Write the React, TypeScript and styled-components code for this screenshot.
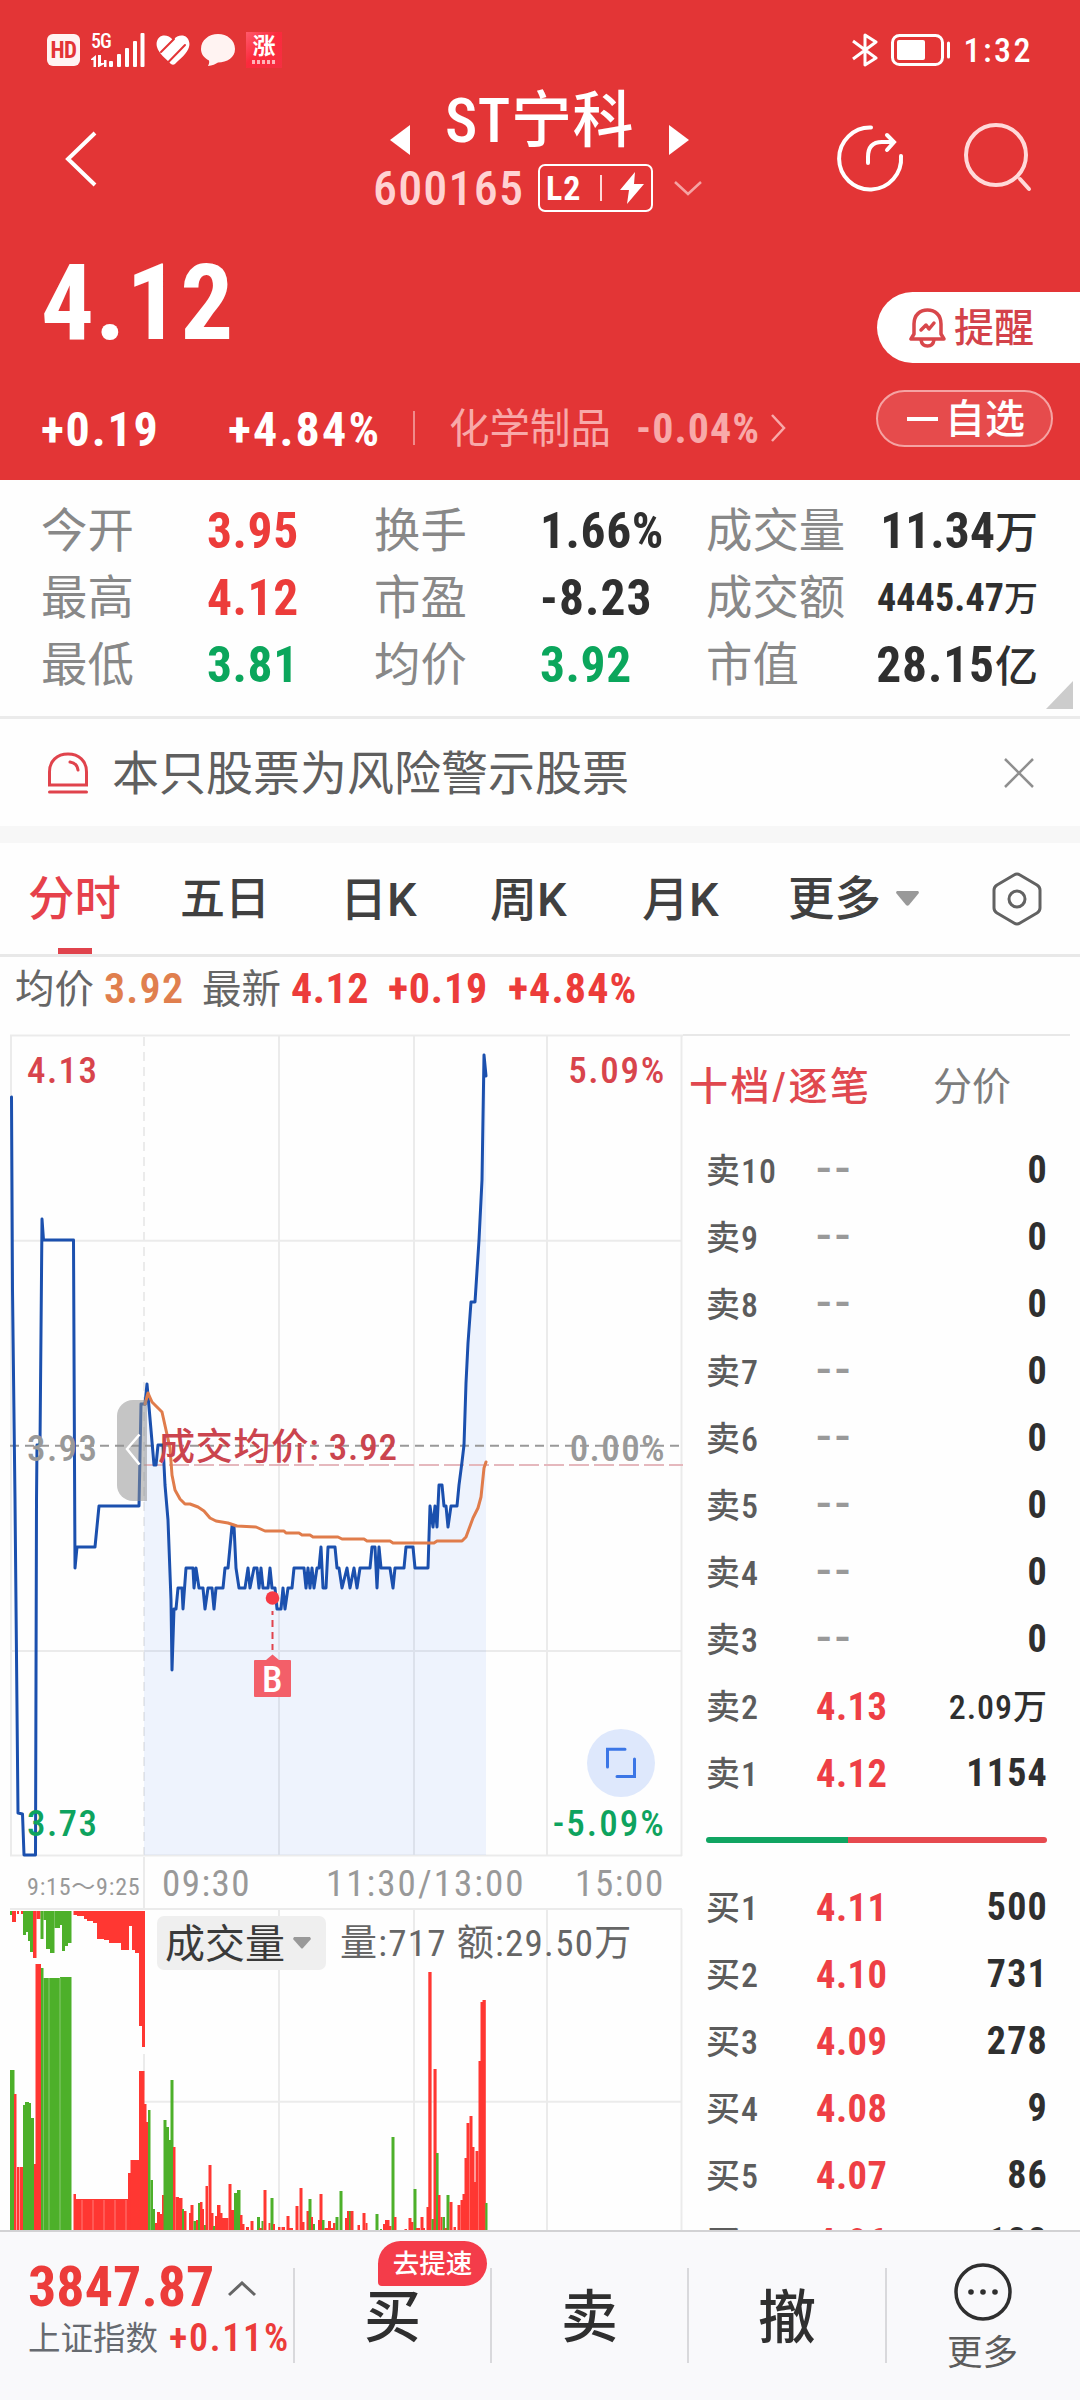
import React from "react";
import styled, { createGlobalStyle } from "styled-components";

const RED = "#e33536";
const UP = "#ec3c3a";
const DOWN = "#0ba65c";
const INK = "#2f2f2f";
const GRID = "#ebebeb";
const BAR_RED = "#ff3732";
const BAR_GREEN = "#4db02a";

const Global = createGlobalStyle`
  * { box-sizing: border-box; }
  body { margin: 0; background: #fff; }
  svg { display: block; flex: none; }
`;

const Screen = styled.div`
  width: 1080px;
  height: 2400px;
  display: flex;
  flex-direction: column;
  overflow: hidden;
  background: #fefefe;
  font-family: Roboto, "Noto Sans CJK SC", sans-serif;
  font-stretch: 85%;
  line-height: 1;
`;

const Txt = styled.span<{ $s: number; $c?: string; $w?: number; $ls?: number; $dy?: number }>`
  display: block;
  flex: none;
  white-space: pre;
  padding-top: 3px;
  font-size: ${(p) => p.$s}px;
  line-height: 1.2;
  color: ${(p) => p.$c ?? "inherit"};
  font-weight: ${(p) => p.$w ?? 400};
  letter-spacing: ${(p) => p.$ls ?? 0}px;
  margin-top: ${(p) => p.$dy ?? 0}px;
`;

/* figures: narrow digits set with open spacing */
const Num = styled(Txt)`
  letter-spacing: calc(${(p) => p.$ls ?? 0}px + 0.058em);
`;

/* ---------- header ---------- */

const Header = styled.header`
  height: 480px;
  flex: none;
  background: ${RED};
  color: #fff;
`;

const StatusBar = styled.div`
  height: 80px;
  padding: 20px 47px 0 47px;
  display: flex;
  align-items: center;
  justify-content: space-between;
`;

const StatusGroup = styled.div<{ $gap: number }>`
  display: flex;
  align-items: center;
  gap: ${(p) => p.$gap}px;
`;

const HdBadge = styled.div`
  width: 33px;
  height: 32px;
  border-radius: 6px;
  background: #fff3f2;
  color: ${RED};
  display: flex;
  align-items: center;
  justify-content: center;
  font-size: 23px;
  font-weight: 700;
  letter-spacing: -0.5px;
`;

const Signal = styled.div`
  width: 54px;
  height: 34px;
  display: grid;
  grid-template-columns: 18px 36px;
  font-size: 20px;
  line-height: 16px;
  font-weight: 500;
  font-stretch: 75%;
  letter-spacing: -1px;
`;

const AppTile = styled.div`
  width: 36px;
  height: 36px;
  background: linear-gradient(135deg, #ff5a6c, #fb2a3c 45%, #f52f42);
  display: flex;
  flex-direction: column;
  align-items: center;
  gap: 2px;
  padding-top: 4px;
  font-size: 23px;
  line-height: 22px;
  font-weight: 700;
`;

const TileRule = styled.div`
  width: 24px;
  height: 4px;
  background: repeating-linear-gradient(90deg, #ffb3b8 0 3px, transparent 3px 5px);
`;

const Nav = styled.div`
  height: 140px;
  display: grid;
  grid-template-columns: 360px 360px 360px;
`;

const NavLeft = styled.div`
  padding: 50px 0 0 64px;
`;

const NavCenter = styled.div`
  display: flex;
  flex-direction: column;
`;

const TitleRow = styled.div`
  height: 78px;
  display: flex;
  align-items: center;
  justify-content: space-between;
  padding: 0 31px 0 30px;
`;

const TitleArrow = styled.svg`
  margin-top: 41px;
`;

const CodeRow = styled.div`
  height: 60px;
  display: flex;
  align-items: center;
  padding-left: 13px;
`;

const CodeCell = styled.div`
  width: 165px;
`;

const LevelBox = styled.div`
  width: 115px;
  height: 48px;
  margin-right: 21px;
  border: 2px solid #fff;
  border-radius: 7px;
  display: flex;
  align-items: center;
  padding-left: 6px;
`;

const LevelRule = styled.div`
  width: 2px;
  height: 26px;
  margin-right: 18px;
  background: #ffd9d9;
`;

const NavRight = styled.div`
  display: flex;
  align-items: flex-start;
  gap: 57px;
  padding: 43px 0 0 115px;
`;

const Quote = styled.div`
  height: 260px;
  display: grid;
  grid-template-columns: 860px 220px;
`;

const PriceLine = styled.div`
  height: 160px;
  display: flex;
  align-items: center;
  padding-left: 41px;
`;

const ChangeLine = styled.div`
  height: 96px;
  display: flex;
  align-items: center;
  padding-left: 41px;
`;

const Cell = styled.div<{ $w: number }>`
  width: ${(p) => p.$w}px;
  flex: none;
  display: flex;
  align-items: center;
`;

const ThinRule = styled.div`
  width: 2px;
  height: 34px;
  background: #f08b8b;
`;

const QuoteActions = styled.div`
  display: flex;
  flex-direction: column;
  align-items: flex-end;
  padding-top: 72px;
  gap: 27px;
`;

const AlertPill = styled.div`
  width: 203px;
  height: 71px;
  border-radius: 36px 0 0 36px;
  background: #fff;
  display: flex;
  align-items: center;
  gap: 8px;
  padding-left: 32px;
`;

const WatchPill = styled.div`
  width: 177px;
  height: 57px;
  margin-right: 27px;
  border-radius: 29px;
  border: 2px solid #f5a3a3;
  background: #e64b4c;
  display: flex;
  align-items: center;
  gap: 7px;
  padding-left: 29px;
`;

const Dash = styled.div`
  width: 31px;
  height: 4px;
  background: #fff;
`;

/* ---------- statistics ---------- */

const Stats = styled.section`
  position: relative;
  height: 239px;
  flex: none;
  padding: 17px 42px 0 41px;
  border-bottom: 3px solid ${GRID};
  display: grid;
  grid-template-columns: 166px 167px 166px 166px 1fr;
  grid-template-rows: repeat(3, 67px);
  align-items: center;
`;

const StatValue = styled.div<{ $c: string }>`
  display: flex;
  align-items: baseline;
  color: ${(p) => p.$c};
`;

const LastPair = styled.div`
  display: flex;
  align-items: center;
  justify-content: space-between;
`;

const Corner = styled.svg`
  position: absolute;
  right: 7px;
  bottom: 7px;
`;

/* ---------- notice ---------- */

const Notice = styled.section`
  height: 107px;
  flex: none;
  display: flex;
  align-items: center;
  padding: 0 46px 0 47px;
`;

const NoticeText = styled.div`
  flex: 1;
  padding-left: 23px;
`;

const Band = styled.div`
  height: 17px;
  flex: none;
  background: #f7f7f7;
`;

/* ---------- tabs ---------- */

const Tabs = styled.nav`
  height: 114px;
  flex: none;
  display: flex;
  border-bottom: 3px solid #e8e8e8;
`;

const Tab = styled.div<{ $pad: number; $w: number; $on?: boolean }>`
  width: ${(p) => p.$w}px;
  padding-left: ${(p) => p.$pad}px;
  height: 111px;
  display: flex;
  align-items: center;
  gap: 15px;
  color: ${(p) => (p.$on ? "#e6414b" : "#404040")};
  background: ${(p) =>
    p.$on ? "linear-gradient(#e0434c, #e0434c) 58px 105px / 34px 6px no-repeat" : "none"};
`;

const TabText = styled(Txt)`
  font-stretch: 100%;
`;

const Info = styled.div`
  height: 77px;
  flex: none;
  padding: 0 0 15px 15px;
  display: flex;
  align-items: center;
`;

/* ---------- main area ---------- */

const Main = styled.main`
  height: 1196px;
  flex: none;
  display: flex;
  overflow: hidden;
`;

const ChartColumn = styled.div`
  width: 683px;
  flex: none;
`;

const PricePane = styled.div`
  position: relative;
  height: 823px;
`;

const ChartLabel = styled.div<{ $top: number; $left?: number; $right?: number; $c: string; $ls?: number }>`
  position: absolute;
  top: ${(p) => p.$top}px;
  ${(p) => (p.$left !== undefined ? `left: ${p.$left}px;` : `right: ${p.$right}px;`)}
  color: ${(p) => p.$c};
  font-size: 37px;
  line-height: 44px;
  font-weight: 500;
  letter-spacing: ${(p) => p.$ls ?? 1.4}px;
  white-space: pre;
`;

const Axis = styled.div`
  height: 51px;
  display: flex;
  align-items: center;
  color: #999;
  padding-left: 27px;
`;

const AxisCell = styled.div<{ $w: number; $pad?: number; $line?: boolean }>`
  width: ${(p) => p.$w}px;
  height: 51px;
  flex: none;
  display: flex;
  align-items: center;
  padding-left: ${(p) => p.$pad ?? 0}px;
  border-right: ${(p) => (p.$line ? `2px solid ${GRID}` : "none")};
`;

const VolumePane = styled.div`
  position: relative;
  height: 322px;
`;

const VolumeHead = styled.div`
  position: absolute;
  left: 157px;
  top: 8px;
  display: flex;
  align-items: center;
  gap: 14px;
`;

const VolumeSelect = styled.div`
  width: 169px;
  height: 54px;
  border-radius: 7px;
  background: #efefef;
  display: flex;
  align-items: center;
  gap: 8px;
  padding-left: 8px;
`;

/* ---------- order book ---------- */

const Book = styled.aside`
  flex: 1;
  display: flex;
  flex-direction: column;
`;

const BookTabs = styled.div`
  height: 102px;
  flex: none;
  margin-right: 10px;
  border-top: 2px solid #e8e8e8;
  display: flex;
  align-items: center;
  padding-left: 6px;
`;

const BookRow = styled.div`
  height: 67px;
  flex: none;
  display: grid;
  grid-template-columns: 110px 110px 1fr;
  align-items: center;
  padding: 0 32px 0 23px;
`;

const RightCell = styled.div`
  display: flex;
  justify-content: flex-end;
  align-items: baseline;
`;

const NoPrice = styled(Txt)`
  font-stretch: 100%;
`;

const Ratio = styled.div`
  height: 6px;
  flex: none;
  margin: 31px 33px 30px 23px;
  border-radius: 3px;
  background: linear-gradient(90deg, #10a562 0 142px, #e64a4f 142px);
`;

/* ---------- bottom bar ---------- */

const Bottom = styled.footer`
  height: 170px;
  flex: none;
  border-top: 2px solid #d2d2d4;
  background: #f9f9fb;
  display: flex;
  align-items: flex-start;
  padding-top: 36px;
`;

const IndexBox = styled.div`
  width: 293px;
  padding-left: 28px;
`;

const IndexLine = styled.div<{ $h: number }>`
  height: ${(p) => p.$h}px;
  display: flex;
  align-items: center;
`;

const Action = styled.div<{ $w: number }>`
  position: relative;
  width: ${(p) => p.$w}px;
  height: 95px;
  border-left: 2px solid #d9d9dc;
  display: flex;
  align-items: center;
  justify-content: center;
`;

const MoreAction = styled(Action)`
  flex-direction: column;
  padding-top: 6px;
`;

const SpeedBadge = styled.div`
  position: absolute;
  left: 83px;
  top: -27px;
  width: 109px;
  height: 45px;
  border-radius: 23px 23px 23px 4px;
  background: #f43c4a;
  color: #fff;
  display: flex;
  align-items: center;
  justify-content: center;
`;

/* ---------- data ---------- */

type Stat = [string, string, string, string, string, string, string, string, string, boolean];

const stats: Stat[] = [
  ["今开", "3.95", UP, "换手", "1.66%", INK, "成交量", "11.34", "万", false],
  ["最高", "4.12", UP, "市盈", "-8.23", INK, "成交额", "4445.47", "万", true],
  ["最低", "3.81", DOWN, "均价", "3.92", DOWN, "市值", "28.15", "亿", false],
];

const sells: [string, string, string][] = [
  ["10", "--", "0"], ["9", "--", "0"], ["8", "--", "0"], ["7", "--", "0"], ["6", "--", "0"],
  ["5", "--", "0"], ["4", "--", "0"], ["3", "--", "0"], ["2", "4.13", "2.09万"], ["1", "4.12", "1154"],
];

const buys: [string, string, string][] = [
  ["1", "4.11", "500"], ["2", "4.10", "731"], ["3", "4.09", "278"],
  ["4", "4.08", "9"], ["5", "4.07", "86"], ["6", "4.06", "188"],
];

const preLine =
  "11.5,1097 12.5,1290 15,1500 18,1813 22.5,1814 24,1855 35.5,1855 36.5,1500 37,1445 40,1445 42,1219 43.5,1240 73.5,1240 75,1568 77,1547 95,1547 99,1506 139,1506 141,1404 145,1404";

const dayLine =
  "145,1404 147,1384 151,1430 154,1465 156,1465 158,1445 163,1445 165,1485 168,1520 171,1600 172,1670 174,1609 176,1609 178,1588 182,1588 183,1609 186,1568 193,1568 194,1588 196,1568 199,1588 203,1588 205,1609 208,1588 212,1588 214,1609 216,1588 223,1588 225,1568 228,1568 232,1526 234,1526 236,1568 239,1588 245,1588 248,1568 250,1588 254,1568 257,1568 259,1588 261,1568 263,1588 268,1588 270,1568 272,1588 275,1588 277,1609 281,1609 283,1588 285,1609 288,1588 292,1588 294,1568 304,1568 306,1588 308,1568 310,1588 312,1568 314,1588 317,1568 319,1568 321,1547 323,1588 326,1588 328,1547 335,1547 337,1568 339,1568 342,1588 347,1568 350,1588 354,1568 357,1588 360,1568 370,1568 372,1547 375,1547 377,1588 379,1547 381,1568 390,1568 393,1588 395,1568 404,1568 406,1547 413,1547 415,1568 428,1568 430,1506 433,1527 435,1506 437,1527 439,1485 442,1485 444,1506 446,1506 448,1527 451,1506 457,1506 459,1485 462,1462 464,1445 466,1383 468,1343 471,1302 475,1302 479,1240 482,1180 484,1055 486,1076";

const avgLine =
  "145,1404 148,1393 152,1402 158,1408 162,1412 166,1430 170,1448 172,1475 175,1490 180,1499 185,1504 190,1504 198,1507 204,1511 210,1518 216,1521 228,1523 237,1526 256,1527 265,1531 284,1531 286,1533 299,1533 302,1535 310,1535 313,1537 338,1537 342,1539 364,1539 367,1541 390,1541 393,1543 434,1543 437,1541 462,1541 466,1537 473,1518 478,1508 481,1497 484,1468 486,1462";

type Bar = [number, number, number, 0 | 1];

/* x start, x end, lower edge, 1 = up / 0 = down */
const hanging: Bar[] = [
  [10, 12, 1915, 0], [12, 16, 1922, 1], [17, 19, 1914, 1], [21, 23, 1914, 1], [23, 26, 1935, 0],
  [26, 28, 1932, 0], [28, 30, 1941, 0], [30, 33, 1952, 0], [33, 36.5, 1958, 1], [36.5, 40.5, 1919, 1],
  [40.5, 43.5, 1939, 0], [43.5, 46, 1920, 0], [46, 50, 1949, 0], [50, 54.5, 1953, 0], [54.5, 60, 1928, 0],
  [60, 62, 1925, 0], [62, 65, 1951, 0], [65, 68, 1946, 0], [68, 71.5, 1943, 0], [73.5, 77, 1915, 1],
  [77, 84, 1916, 1], [84, 87, 1919, 1], [87, 93, 1921, 1], [93, 97, 1923, 1], [97, 104, 1939, 1],
  [104, 109, 1940, 1], [109, 121, 1943, 1], [121, 129, 1950, 1], [129, 132, 1926, 1],
  [132, 135, 1950, 1], [135, 139, 1953, 1], [139, 142, 2026, 1], [142, 145, 2047, 1],
];

const rising: Bar[] = [
  [10, 14.5, 2070, 0], [14, 16.5, 2094, 1], [17, 19.5, 2167, 1], [20, 23, 2167, 1], [23, 25, 2105, 0], [25, 29, 2102, 0],
  [29, 31, 2103, 0], [31, 34, 2118, 0], [34, 36, 2164, 1], [35.5, 41, 1964, 1], [41, 43.5, 1968, 0],
  [43.5, 60, 1978, 0], [60, 71.5, 1977, 0], [73.5, 76, 2194, 1], [76, 128, 2199, 1], [128, 131, 2173, 1],
  [130.5, 139.5, 2160, 1], [139, 144.5, 2071, 1], [144, 146.5, 2104, 1], [146, 148, 2122, 1],
  [148, 150.5, 2110, 0], [150.5, 153, 2180, 0], [153, 155, 2209, 0], [155, 157, 2223, 1],
  [157, 160, 2212, 1], [160, 162, 2214, 1], [162, 164, 2195, 1], [163.5, 166.5, 2120, 0],
  [166, 169, 2127, 0], [169, 171, 2140, 0], [170.5, 173.5, 2080, 0], [173, 175.5, 2147, 1],
  [175.5, 179, 2197, 1], [179, 182.5, 2198, 1], [182, 184, 2209, 0], [184, 186.5, 2211, 1],
  [189, 191, 2213, 1], [190.5, 193.5, 2205, 1], [193.5, 196, 2221, 0], [196, 198, 2220, 1],
  [198, 200, 2203, 0], [200, 202.5, 2202, 1], [202, 204, 2209, 1], [204, 206, 2225, 0],
  [205.5, 208, 2186, 1], [208.5, 211.5, 2165, 1], [211, 213.5, 2213, 1], [213, 215, 2226, 0],
  [215, 217.5, 2216, 1], [217, 220.5, 2205, 1], [220, 222.5, 2213, 1], [222, 228.5, 2218, 1],
  [228.5, 231.5, 2184, 1], [231, 234, 2210, 1], [234, 237, 2193, 0], [237, 240.5, 2190, 0],
  [240, 242.5, 2215, 1], [242, 244.5, 2224, 1], [246, 249, 2227, 1], [250.5, 253.5, 2221, 1],
  [257, 260, 2217, 0], [259, 262, 2228, 1], [261.5, 263.5, 2221, 0], [263.5, 266.5, 2190, 1],
  [268.5, 270.5, 2223, 1], [270.5, 273.5, 2198, 0], [273, 275, 2224, 1], [278, 280.5, 2227, 1],
  [281.5, 285, 2227, 1], [286.5, 289.5, 2216, 1], [289, 293, 2228, 1], [295.5, 298.5, 2206, 1],
  [299.5, 302.5, 2188, 1], [302, 304.5, 2222, 1], [306.5, 309, 2211, 1], [308.5, 311.5, 2199, 0],
  [311, 313, 2217, 1], [313, 315, 2224, 0], [318, 320, 2220, 1], [319.5, 322.5, 2194, 1],
  [322, 324.5, 2220, 0], [324.5, 328, 2228, 1], [328, 331, 2221, 1], [331, 333.5, 2228, 1],
  [333, 335.5, 2223, 1], [335.5, 338.5, 2217, 0], [339.5, 342.5, 2191, 0], [345, 347.5, 2218, 1],
  [347, 353.5, 2211, 1], [349, 350.5, 2211, 0], [357.5, 360, 2225, 1], [362.5, 365.5, 2213, 1], [365.5, 367.5, 2223, 1],
  [375.5, 378.5, 2214, 0], [380, 382, 2229, 0], [383, 385.5, 2224, 1], [385, 389.5, 2220, 1],
  [389, 391.5, 2226, 1], [391.5, 394.5, 2137, 0], [394, 396.5, 2217, 1], [404.5, 407, 2229, 1],
  [408.5, 411.5, 2218, 1], [411, 413.5, 2222, 1], [413.5, 416.5, 2189, 0], [416, 420, 2228, 1],
  [420.5, 423.5, 2217, 1], [423, 425, 2228, 1], [426.5, 429, 2207, 1], [428.3, 431.6, 1972, 1],
  [431.5, 434, 2219, 0], [433.5, 436.6, 2069, 1], [436, 438.6, 2153, 0], [438, 440.5, 2195, 1],
  [440.5, 442.5, 2217, 1], [442.5, 445, 2217, 0], [444.5, 447, 2228, 1], [446.5, 449.5, 2195, 0],
  [449.5, 452.5, 2202, 1], [453.5, 456, 2227, 1], [457.5, 460.5, 2205, 1], [460.5, 463, 2200, 1],
  [462.5, 465, 2194, 1], [464.5, 467.5, 2158, 1], [466.5, 469.5, 2123, 1], [469.5, 472.5, 2116, 1],
  [472, 474.5, 2147, 1], [474, 476, 2182, 1], [475.5, 478.5, 2151, 1], [478.5, 481, 2061, 1],
  [480.5, 483.5, 2002, 1], [482.5, 485.8, 2000, 1], [485.3, 487.5, 2203, 0],
];

const seams = [49, 60, 82, 93, 104, 115, 126];

/* ---------- charts ---------- */

function PriceSvg() {
  return (
    <svg width="683" height="823" viewBox="0 1034 683 823" fill="none">
      <g stroke={GRID} strokeWidth="2">
        <path d="M10 1035.5H683M11 1035V1856M279 1035V1856M414 1035V1856M547 1035V1856M681.5 1035V1856M10 1240.7H682M10 1651H682" />
        <path d="M10 1855.5H682" />
        <path d="M144 1037V1856" strokeDasharray="9 6" />
      </g>
      <polygon points={`${dayLine} 486,1855 144,1855 144,1404`} fill="#1e64f0" fillOpacity="0.07" />
      <path d="M10 1445.7H680" stroke="#999" strokeWidth="2" strokeDasharray="9 6" />
      <path d="M144 1465H683" stroke="#e5b8bd" strokeWidth="2" strokeDasharray="20 5" />
      <g stroke="#1b50ae" strokeWidth="3" strokeLinejoin="round" strokeLinecap="round">
        <polyline points={preLine} />
        <polyline points={dayLine} />
      </g>
      <polyline points={avgLine} stroke="#e07c4b" strokeWidth="3" strokeLinejoin="round" strokeLinecap="round" />
      <path d="M147 1400H133a16 16 0 0 0-16 16V1485a16 16 0 0 0 16 16H147Z" fill="#8f8f8f" fillOpacity="0.52" />
      <path d="M139.500 1434.500L127 1449L139.500 1464.500" stroke="#fff" strokeWidth="2.500" />
      <path d="M272.500 1611V1650" stroke="#e0434c" strokeWidth="2" strokeDasharray="7 5" strokeDashoffset="3" />
      <circle cx="272.500" cy="1598" r="6.800" fill="#f63a45" />
      <path d="M266 1660L272.500 1654.500L279 1660H290a1 1 0 0 1 1 1V1696a1 1 0 0 1-1 1H255a1 1 0 0 1-1-1V1661a1 1 0 0 1 1-1Z" fill="#f35f69" />
      <circle cx="621" cy="1763" r="34" fill="#dee8fc" />
      <path d="M607.500 1767V1749.300H625M634.500 1759V1776.500H617" stroke="#3b76e6" strokeWidth="3" strokeLinecap="round" />
    </svg>
  );
}

function VolumeSvg() {
  return (
    <svg width="683" height="322" viewBox="0 1908 683 322" fill="none">
      <path
        d="M10 1909H682M144 2101.700H682M279 1909V2230M414 1909V2230M547 1909V2230M681.500 1909V2230M144 2054V2090"
        stroke={GRID}
        strokeWidth="2"
      />
      {hanging.map(([a, b, y, up], i) => (
        <rect key={i} x={a} y={1911} width={b - a} height={y - 1911} fill={up ? BAR_RED : BAR_GREEN} />
      ))}
      {rising.map(([a, b, y, up], i) => (
        <rect key={i} x={a} y={y} width={b - a} height={2230 - y} fill={up ? BAR_RED : BAR_GREEN} />
      ))}
      {seams.map((x) => (
        <path key={x} d={`M${x} ${x < 73 ? 1978 : 2200}V2230`} stroke="#fff" strokeOpacity="0.35" />
      ))}
    </svg>
  );
}

export default function App() {
  return (
    <Screen>
      <Global />
      <Header>
        <StatusBar>
          <StatusGroup $gap={11}>
            <HdBadge>HD</HdBadge>
            <Signal>
              <span>5G</span>
              <svg width="54" height="34" viewBox="0 0 54 34" style={{ marginLeft: -18 }} fill="#fff">
                <path d="M0 26L5 22V34H2.500V27H0ZM7 22H10V30H15L8 34H7ZM13 27H15.500V34H13Z" />
                <rect x="18" y="28" width="4" height="6" rx="1" />
                <rect x="26" y="21" width="4" height="13" rx="1" />
                <rect x="34" y="15" width="4" height="19" rx="1" />
                <rect x="42" y="8" width="4" height="26" rx="1" />
                <rect x="49.500" y="0" width="4" height="34" rx="1" />
              </svg>
            </Signal>
            <svg width="34" height="30" viewBox="0 0 34 30">
              <path d="M17 5C20 1 24 0 27 .5C32 1.500 34.500 7 33 12C31.500 18 24 24 19 29Q17 30.500 15 29C10 24 2.500 18 1 12C-.5 7 2 1.500 7 .5C10 0 14 1 17 5Z" fill="#fff" />
              <path d="M5 17L18 4M11.500 28L29 10" stroke={RED} strokeWidth="2" strokeLinecap="round" />
            </svg>
            <svg width="34" height="32" viewBox="0 0 34 32" fill="#fff3f2">
              <path d="M17 0C26 0 34 6 34 15S26 28 17 28.500C15 30 11 31.500 7 32C8 30 8.500 28.500 8 26.500C3 24 0 20 0 15C0 6 8 0 17 0Z" />
            </svg>
            <AppTile>
              涨
              <TileRule />
            </AppTile>
          </StatusGroup>
          <StatusGroup $gap={12}>
            <svg width="28" height="34" viewBox="0 0 28 34" fill="none" stroke="#fff" strokeWidth="3" strokeLinejoin="round">
              <path d="M2 8L25 25L14 32V2L25 9L2 26" />
            </svg>
            <svg width="60" height="32" viewBox="0 0 60 32" fill="none">
              <rect x="1.500" y="1.500" width="50" height="29" rx="7" stroke="#fff" strokeWidth="3" />
              <rect x="6" y="6" width="28" height="20" rx="2" fill="#fff" />
              <path d="M57.500 9V23" stroke="#fff" strokeWidth="3" strokeLinecap="round" />
            </svg>
            <Num $s={34} $w={500} $ls={0.5} $dy={-3}>1:32</Num>
          </StatusGroup>
        </StatusBar>
        <Nav>
          <NavLeft>
            <svg width="34" height="58" viewBox="0 0 34 58" fill="none" stroke="#fff" strokeWidth="4">
              <path d="M31 3L4 29L31 55" />
            </svg>
          </NavLeft>
          <NavCenter>
            <TitleRow>
              <TitleArrow width="20" height="30" viewBox="0 0 20 30" fill="#fff"><path d="M20 0V30L0 15Z" /></TitleArrow>
              <Txt $s={61} $w={500} $ls={0.6} $dy={3}>ST宁科</Txt>
              <TitleArrow width="20" height="30" viewBox="0 0 20 30" fill="#fff"><path d="M0 0V30L20 15Z" /></TitleArrow>
            </TitleRow>
            <CodeRow>
              <CodeCell><Num $s={48} $w={500} $c="#ffd2d2" $ls={-1.6} $dy={-2}>600165</Num></CodeCell>
              <LevelBox>
                <Cell $w={54}><Num $s={34} $w={700} $ls={-1} $dy={-3}>L2</Num></Cell>
                <LevelRule />
                <svg width="24" height="32" viewBox="0 0 24 32" fill="#fff"><path d="M15 0L0 18H9L7 32L24 12H14Z" /></svg>
              </LevelBox>
              <svg width="28" height="16" viewBox="0 0 28 16" fill="none" stroke="#f5a3a3" strokeWidth="2.500"><path d="M1 2L14 14L27 2" /></svg>
            </CodeRow>
          </NavCenter>
          <NavRight>
            <svg width="70" height="70" viewBox="0 0 70 70" fill="none" stroke="#fff" strokeWidth="4" strokeLinecap="round">
              <path d="M36 4.500A31 31 0 1 0 66 33" />
              <path d="M33 40V34Q33 19 47 19H58M52 12L59 19L52 27" />
            </svg>
            <svg width="72" height="72" viewBox="0 0 72 72" fill="none" stroke="#ffd9d9" strokeWidth="4" strokeLinecap="round">
              <circle cx="34" cy="32" r="30" />
              <path d="M58 56L67 66" />
            </svg>
          </NavRight>
        </Nav>
        <Quote>
          <div>
            <PriceLine><Num $s={105} $w={700} $ls={-5.2} $dy={4}>4.12</Num></PriceLine>
            <ChangeLine>
              <Cell $w={187}><Num $s={48} $w={700} $ls={-1}>+0.19</Num></Cell>
              <Cell $w={185}><Num $s={48} $w={700} $ls={-0.6}>+4.84%</Num></Cell>
              <Cell $w={36}><ThinRule /></Cell>
              <Cell $w={187}><Txt $s={40.5} $c="#f8a9a9">化学制品</Txt></Cell>
              <Cell $w={134}><Num $s={42} $w={700} $c="#f8a9a9" $ls={-1.4}>-0.04%</Num></Cell>
              <svg width="16" height="28" viewBox="0 0 16 28" fill="none" stroke="#f8a9a9" strokeWidth="2.500"><path d="M2 1L14 14L2 27" /></svg>
            </ChangeLine>
          </div>
          <QuoteActions>
            <AlertPill>
              <svg width="37" height="40" viewBox="0 0 37 40" fill="none" stroke="#d8474b" strokeWidth="3.500" strokeLinejoin="round" strokeLinecap="round">
                <path d="M2 31H35L32 26V16C32 7 26 2 18.500 2S5 7 5 16V26ZM12 32Q13 38 18.500 38T25 32" />
                <path d="M12 22L17 17L20 21L25 15" />
              </svg>
              <Txt $s={40} $w={500} $c="#d3424a">提醒</Txt>
            </AlertPill>
            <WatchPill>
              <Dash />
              <Txt $s={40} $w={500}>自选</Txt>
            </WatchPill>
          </QuoteActions>
        </Quote>
      </Header>

      <Stats>
        {stats.map(([l1, v1, c1, l2, v2, c2, l3, v3, unit, small]) => (
          <React.Fragment key={l1}>
            <Txt $s={46.4} $c="#888">{l1}</Txt>
            <StatValue $c={c1}><Num $s={49.5} $w={700} $ls={-2.3}>{v1}</Num></StatValue>
            <Txt $s={46.4} $c="#888">{l2}</Txt>
            <StatValue $c={c2}><Num $s={49.5} $w={700} $ls={v2.startsWith("-") ? -1.8 : -2.3}>{v2}</Num></StatValue>
            <LastPair>
              <Txt $s={46.4} $c="#888">{l3}</Txt>
              <StatValue $c={INK}>
                <Num $s={small ? 38 : 49.5} $w={700} $ls={small ? -2.1 : v3 === "28.15" ? -2 : -2.8}>{v3}</Num>
                <Txt $s={small ? 34 : 43} $w={500}>{unit}</Txt>
              </StatValue>
            </LastPair>
          </React.Fragment>
        ))}
        <Corner width="27" height="28" viewBox="0 0 27 28" fill="#ccc"><path d="M27 0V28H0Z" /></Corner>
      </Stats>

      <Notice>
        <svg width="42" height="42" viewBox="0 0 42 42" fill="none" stroke="#e0434c" strokeWidth="3" strokeLinecap="round">
          <path d="M2.500 33V20C2.500 9 10 2 21 2S39.500 9 39.500 20V33ZM2.500 40H39.500M23 10Q30 11 31 18" />
        </svg>
        <NoticeText><Txt $s={47} $c="#5f5f5f">本只股票为风险警示股票</Txt></NoticeText>
        <svg width="30" height="30" viewBox="0 0 30 30" fill="none" stroke="#8f8f8f" strokeWidth="2.500"><path d="M1 1L29 29M29 1L1 29" /></svg>
      </Notice>
      <Band />

      <Tabs>
        <Tab $pad={28} $w={150} $on><TabText $s={46.4} $w={500}>分时</TabText></Tab>
        <Tab $pad={30} $w={160}><TabText $s={45} $w={500}>五日</TabText></Tab>
        <Tab $pad={30} $w={150}><TabText $s={47} $w={500}>日K</TabText></Tab>
        <Tab $pad={30} $w={150}><TabText $s={47} $w={500}>周K</TabText></Tab>
        <Tab $pad={32} $w={150}><TabText $s={47} $w={500}>月K</TabText></Tab>
        <Tab $pad={28} $w={230}>
          <TabText $s={46.4} $w={500}>更多</TabText>
          <svg width="23" height="15" viewBox="0 0 23 15" fill="#999"><path d="M1 0H22Q23.500 1 22.500 2.500L13 14Q11.500 15.500 10 14L.5 2.500Q-.5 1 1 0Z" /></svg>
        </Tab>
        <Tab $pad={2} $w={80}>
          <svg width="50" height="54" viewBox="0 0 50 54" fill="none" stroke="#626262" strokeWidth="3" strokeLinejoin="round">
            <path d="M22 3Q25 1 28 3L45 13Q48 15 48 18V36Q48 39 45 41L28 51Q25 53 22 51L5 41Q2 39 2 36V18Q2 15 5 13Z" />
            <circle cx="25" cy="27" r="8" />
          </svg>
        </Tab>
      </Tabs>

      <Info>
        <Cell $w={89}><Txt $s={39.5} $c="#666">均价</Txt></Cell>
        <Cell $w={98}><Num $s={42} $w={600} $c="#e07f4e" $ls={-1.2}>3.92</Num></Cell>
        <Cell $w={89}><Txt $s={39.5} $c="#666">最新</Txt></Cell>
        <Cell $w={97}><Num $s={42} $w={700} $c={UP} $ls={-1.9}>4.12</Num></Cell>
        <Cell $w={120}><Num $s={42} $w={700} $c={UP} $ls={-1.6}>+0.19</Num></Cell>
        <Num $s={42} $w={700} $c={UP} $ls={-1.3}>+4.84%</Num>
      </Info>

      <Main>
        <ChartColumn>
          <PricePane>
            <PriceSvg />
            <ChartLabel $left={27} $top={15} $c="#d8444c">4.13</ChartLabel>
            <ChartLabel $right={17} $top={15} $ls={1.7} $c="#d8444c">5.09%</ChartLabel>
            <ChartLabel $left={27} $top={393} $c="#999">3.93</ChartLabel>
            <ChartLabel $right={17} $top={393} $c="#999">0.00%</ChartLabel>
            <ChartLabel $left={27} $top={768} $c="#0ea35f">3.73</ChartLabel>
            <ChartLabel $right={17} $top={768} $ls={2.1} $c="#0ea35f">-5.09%</ChartLabel>
            <ChartLabel $left={158} $top={392} $ls={0.8} $c="#cb444e">成交均价: 3.92</ChartLabel>
            <ChartLabel $left={262} $top={624} $ls={0} $c="#fff">B</ChartLabel>
          </PricePane>
          <Axis>
            <AxisCell $w={118} $line><Num $s={24} $ls={-0.6} $dy={6}>9:15～9:25</Num></AxisCell>
            <AxisCell $w={181} $pad={17}><Num $s={37} $ls={-0.7}>09:30</Num></AxisCell>
            <AxisCell $w={249}><Num $s={37} $ls={-0.1}>11:30/13:00</Num></AxisCell>
            <Num $s={37} $ls={-0.5}>15:00</Num>
          </Axis>
          <VolumePane>
            <VolumeSvg />
            <VolumeHead>
              <VolumeSelect>
                <Txt $s={40} $c="#3a3a3a">成交量</Txt>
                <svg width="18" height="12" viewBox="0 0 18 12" fill="#999"><path d="M1 0H17L18 2L10 11Q9 12 8 11L0 2Z" /></svg>
              </VolumeSelect>
              <Txt $s={37} $c="#666" $ls={1.3}>量:717 额:29.50万</Txt>
            </VolumeHead>
          </VolumePane>
        </ChartColumn>

        <Book>
          <BookTabs>
            <Cell $w={244}><Txt $s={39} $w={500} $c="#e0484f" $ls={2.6}>十档/逐笔</Txt></Cell>
            <Txt $s={39} $c="#7d7d7d">分价</Txt>
          </BookTabs>
          {sells.map(([n, price, qty]) => (
            <BookRow key={n}>
              <Txt $s={34} $w={500} $c="#5c5c5c" $ls={1}>{`卖${n}`}</Txt>
              {price === "--" ? (
                <NoPrice $s={46} $w={500} $c="#999" $ls={3} $dy={-4}>--</NoPrice>
              ) : (
                <Num $s={38.5} $w={700} $c="#ee3f45" $ls={-1.8}>{price}</Num>
              )}
              <RightCell><Num $s={qty.endsWith("万") ? 34 : 38} $w={qty.endsWith("万") ? 500 : 700} $c={INK} $ls={-1}>{qty}</Num></RightCell>
            </BookRow>
          ))}
          <Ratio />
          {buys.map(([n, price, qty]) => (
            <BookRow key={n}>
              <Txt $s={34} $w={500} $c="#5c5c5c" $ls={1}>{`买${n}`}</Txt>
              <Num $s={38.5} $w={700} $c="#ee3f45" $ls={-1.8}>{price}</Num>
              <RightCell><Num $s={38} $w={700} $c={INK} $ls={-1}>{qty}</Num></RightCell>
            </BookRow>
          ))}
        </Book>
      </Main>

      <Bottom>
        <IndexBox>
          <IndexLine $h={41}>
            <Cell $w={200}><Num $s={56} $w={700} $c={UP} $ls={-3.2} $dy={-5}>3847.87</Num></Cell>
            <svg width="28" height="16" viewBox="0 0 28 16" fill="none" stroke="#666" strokeWidth="3"><path d="M1 14L14 2L27 14" /></svg>
          </IndexLine>
          <IndexLine $h={58}>
            <Cell $w={141}><Txt $s={32.5} $c="#666a70">上证指数</Txt></Cell>
            <Num $s={38} $w={600} $c={UP} $ls={-0.5} $dy={-2}>+0.11%</Num>
          </IndexLine>
        </IndexBox>
        <Action $w={197}>
          <Txt $s={57} $w={500} $c={INK} $dy={3}>买</Txt>
          <SpeedBadge><Txt $s={26.5} $w={500} $dy={-3}>去提速</Txt></SpeedBadge>
        </Action>
        <Action $w={197}><Txt $s={57} $w={500} $c={INK} $dy={3}>卖</Txt></Action>
        <Action $w={198}><Txt $s={58} $w={500} $c={INK} $dy={3}>撤</Txt></Action>
        <MoreAction $w={193}>
          <svg width="58" height="58" viewBox="0 0 58 58" fill="none">
            <circle cx="29" cy="29" r="27" stroke={INK} strokeWidth="3.500" />
            <g fill={INK}><circle cx="17" cy="29" r="2.800" /><circle cx="29" cy="29" r="2.800" /><circle cx="41" cy="29" r="2.800" /></g>
          </svg>
          <Txt $s={35.5} $c="#5c5c5c" $dy={8}>更多</Txt>
        </MoreAction>
      </Bottom>
    </Screen>
  );
}
